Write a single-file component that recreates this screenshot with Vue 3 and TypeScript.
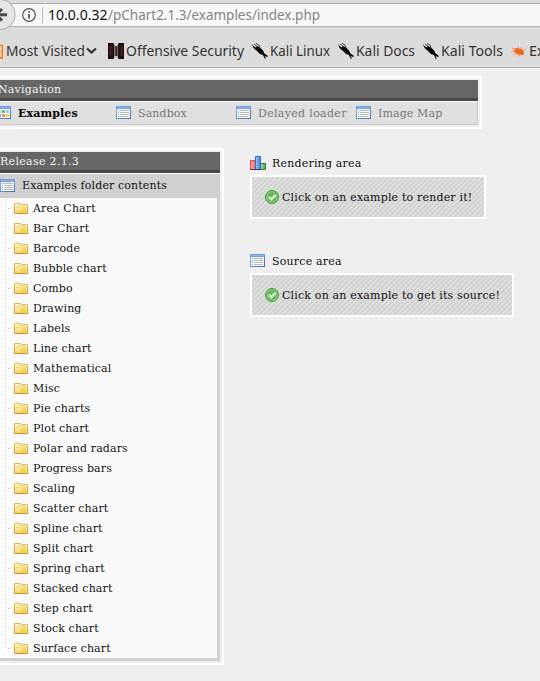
<script setup lang="ts">
interface Bookmark { label: string; kind: 'feed' | 'offsec' | 'kali' | 'exploit'; width: number; text: number }
interface Tab { label: string; active: boolean; wide?: boolean }

const bookmarks: Bookmark[] = [
  { label: 'Most Visited', kind: 'feed', width: 108, text: 79 },
  { label: 'Offensive Security', kind: 'offsec', width: 144, text: 118 },
  { label: 'Kali Linux', kind: 'kali', width: 86, text: 60 },
  { label: 'Kali Docs', kind: 'kali', width: 85, text: 59 },
  { label: 'Kali Tools', kind: 'kali', width: 88, text: 62 },
  { label: 'Exploit-DB', kind: 'exploit', width: 100, text: 70 },
]
const tabs: Tab[] = [
  { label: 'Examples', active: true },
  { label: 'Sandbox', active: false },
  { label: 'Delayed loader', active: false, wide: true },
  { label: 'Image Map', active: false },
]
const folders: string[] = [
  'Area Chart', 'Bar Chart', 'Barcode', 'Bubble chart', 'Combo', 'Drawing', 'Labels', 'Line chart',
  'Mathematical', 'Misc', 'Pie charts', 'Plot chart', 'Polar and radars', 'Progress bars', 'Scaling',
  'Scatter chart', 'Spline chart', 'Split chart', 'Spring chart', 'Stacked chart', 'Step chart',
  'Stock chart', 'Surface chart',
]
const areas = [
  { title: 'Rendering area', message: 'Click on an example to render it!', chart: true },
  { title: 'Source area', message: 'Click on an example to get its source!', chart: false },
]
</script>

<template>
  <svg class="defs" width="0" height="0">
    <defs>
      <linearGradient id="blueFrame" x2="1" y2="1"><stop stop-color="#8fb6e8" /><stop offset="1" stop-color="#3d6fbe" /></linearGradient>
      <linearGradient id="gold" x2="1" y2="1"><stop stop-color="#fffbe0" /><stop offset=".45" stop-color="#f8e08a" /><stop offset="1" stop-color="#efc916" /></linearGradient>
      <linearGradient id="goldEdge" x2="0" y2="1"><stop stop-color="#e6bd50" /><stop offset="1" stop-color="#d98b2b" /></linearGradient>
      <linearGradient id="redBar"><stop stop-color="#ffb0a8" /><stop offset="1" stop-color="#f9625e" /></linearGradient>
      <linearGradient id="blueBar"><stop stop-color="#9cc8f8" /><stop offset="1" stop-color="#3f7fdc" /></linearGradient>
      <linearGradient id="greenBar"><stop stop-color="#a9d4a3" /><stop offset="1" stop-color="#559e52" /></linearGradient>
      <symbol id="list" viewBox="0 0 15 13">
        <rect x=".5" y=".5" width="14" height="12" fill="#fff" stroke="url(#blueFrame)" />
        <path d="M0 0h15v3H0z" fill="#6f9bdf" /><path d="M1 1h13v1H1z" fill="#8db4ea" />
        <path d="M2 4.500h1M2 6.500h1M2 8.500h1M2 10.500h1" stroke="#4fb1ff" />
        <path d="M4 4.500h9M4 6.500h9M4 8.500h9M4 10.500h9" stroke="#b7b7b7" />
      </symbol>
      <symbol id="grid" viewBox="0 0 15 13">
        <rect x=".5" y=".5" width="14" height="12" fill="#fff" stroke="url(#blueFrame)" />
        <path d="M0 0h15v3H0z" fill="#6f9bdf" /><path d="M1 1h13v1H1z" fill="#8db4ea" />
        <path d="M2 4h3v3H2zM10 4h3v3h-3z" fill="#8ccaff" /><path d="M6 4h3v3H6z" fill="#77b75f" />
        <path d="M2 8h3v3H2z" fill="#5fa9ee" /><path d="M6 8h3v3H6z" fill="#ff8a55" /><path d="M10 8h3v3h-3z" fill="#f3d34f" />
      </symbol>
      <symbol id="folder" viewBox="0 0 14 11">
        <path d="M.5 10.500V.5h6l1 1h6v9z" fill="#fff4c5" stroke="url(#goldEdge)" />
        <path d="M2 9.500V4.500h4l1-1h5v6z" fill="url(#gold)" stroke="#edca5b" stroke-width=".7" />
        <path d="M4 2.500h3" stroke="#efc966" />
      </symbol>
      <symbol id="bars" viewBox="0 0 16 14">
        <path d="M.5 4.500h5v9h-5z" fill="url(#redBar)" stroke="#ea4a4e" />
        <path d="M10.500 7.500h5v6h-5z" fill="url(#greenBar)" stroke="#39803d" />
        <path d="M5.500 .5h5v13h-5z" fill="url(#blueBar)" stroke="#2f6fcc" />
        <path d="M0 13.500h5" stroke="#a4232c" /><path d="M5 13.500h6" stroke="#17458d" />
      </symbol>
      <symbol id="check" viewBox="0 0 14 14">
        <circle cx="7" cy="7" r="6.500" fill="#62bb52" stroke="#359b30" />
        <circle cx="7" cy="7" r="5.300" fill="none" stroke="#9bd889" stroke-width=".9" />
        <path d="M4 7l2.300 2.300L10.500 4.900" fill="none" stroke="#fff" stroke-width="2.200" />
      </symbol>
    </defs>
  </svg>

  <header class="browser">
    <div class="address">
      <div class="back">
        <svg width="32" height="30" viewBox="0 0 32 30"><circle cx="16" cy="14.500" r="15.200" fill="#e5e5e5" stroke="#aaa" /><path d="M23 14.800H12M18 9l-6 5.800 6 5.800" fill="none" stroke="#4a4a4a" stroke-width="3" /></svg>
      </div>
      <svg class="info" width="14" height="14" viewBox="0 0 14 14"><circle cx="7" cy="7" r="6.300" fill="none" stroke="#555" stroke-width="1.200" /><path d="M7 6v4.500M7 3.200v1.600" stroke="#444" stroke-width="1.600" /></svg>
      <span class="divider"></span>
      <svg class="url" width="290" height="22"><text class="host" x="0" y="16" textLength="59.500" lengthAdjust="spacingAndGlyphs">10.0.0.32</text><text x="60" y="16" textLength="212" lengthAdjust="spacingAndGlyphs">/pChart2.1.3/examples/index.php</text></svg>
    </div>
    <nav class="bookmarks">
      <div v-for="b in bookmarks" :key="b.label" class="bookmark" :style="{ width: b.width + 'px' }">
        <svg v-if="b.kind === 'feed'" class="feed" width="16" height="16" viewBox="0 0 16 16"><path d="M1 2.500h14.300v12.500H1" fill="#fbe9d6" stroke="#ef7909" stroke-width="1.500" /><path d="M9 6.500h4v8M9 10h2v5" fill="none" stroke="#ef9a45" /></svg>
        <svg v-else-if="b.kind === 'offsec'" width="16" height="16" viewBox="0 0 16 16"><path d="M0 0h16v16H0z" fill="#180b0d" /><path d="M1 3h2v9H1zM13 2h2v11h-2z" fill="#42191c" /><path d="M5.500 0h5l-1 3v10l1 3h-5l1-3V3z" fill="#d9d1cc" /><path d="M7.300 3h1.600v10H7.300z" fill="#1d1213" /><path d="M4 1v14M12 2v12" stroke="#54292b" stroke-width=".8" /></svg>
        <svg v-else-if="b.kind === 'kali'" width="16" height="16" viewBox="0 0 16 16"><path d="M0 1l1.500 2L4 4.500 5 3l3 1.500 3 3 1.500 3L16 13l-1 1-2.500-1 1.500 3-1.500-.5L11 12l-3-1-3-3-2.500-2L1 4z" fill="#050505" /><path d="M4 .5l3 1.500 1 2.500M2 1l4 3" stroke="#222" stroke-width=".8" fill="none" /></svg>
        <svg v-else width="16" height="16" viewBox="0 0 16 16"><ellipse cx="8" cy="8.500" rx="5.300" ry="3.200" transform="rotate(22 8 8.500)" fill="#f0660f" /><path d="M1 5l5 2M0 9l5-1M2 12l4-2M7 3l1 4M10 4l1 3M13 7l2-1M12 11l2 2M8 10l-1 4" stroke="#ee8d52" stroke-width=".9" /></svg>
        <svg class="label" :width="b.text + 1" height="24"><text x="0" y="17" :textLength="b.text" lengthAdjust="spacingAndGlyphs">{{ b.label }}</text></svg>
        <svg v-if="b.kind === 'feed'" class="chevron" width="11" height="8" viewBox="0 0 11 8"><path d="M1 1.500l4.500 4 4.500-4" fill="none" stroke="#333" stroke-width="2.300" /></svg>
      </div>
    </nav>
  </header>

  <main class="page">
    <section class="frame navigation">
      <h2 class="bar">Navigation</h2>
      <div class="tabs">
        <a v-for="t in tabs" :key="t.label" class="tab" :class="{ active: t.active, wide: t.wide }">
          <svg width="15" height="13"><use :href="t.active ? '#grid' : '#list'" /></svg><span>{{ t.label }}</span>
        </a>
      </div>
    </section>

    <div class="columns">
      <section class="frame sidebar">
        <h2 class="bar release">Release 2.1.3</h2>
        <div class="heading"><svg width="15" height="13"><use href="#list" /></svg>Examples folder contents</div>
        <ul class="tree">
          <li v-for="f in folders" :key="f"><span class="branch"></span><svg width="14" height="11"><use href="#folder" /></svg><span class="name">{{ f }}</span></li>
        </ul>
      </section>

      <div class="areas">
        <section v-for="a in areas" :key="a.title" class="area">
          <h3>
            <svg v-if="a.chart" width="16" height="14"><use href="#bars" /></svg>
            <svg v-else width="16" height="14" viewBox="0 0 16 14"><use href="#list" width="15" height="13" /></svg>
            <span>{{ a.title }}</span>
          </h3>
          <div class="message"><svg width="14" height="14"><use href="#check" /></svg><span>{{ a.message }}</span></div>
        </section>
      </div>
    </div>
  </main>
</template>

<style>
body { background: #efefef; overflow: hidden; }
</style>

<style scoped>
* { box-sizing: border-box; }
svg { flex: none; display: block; }
.defs { position: absolute; }
.browser { height: 68px; background: #dcdcdc; border-bottom: 1px solid #aeaeae; padding-top: 3px; font-family: "Noto Sans", "Open Sans", sans-serif; }
.address { height: 24px; display: flex; align-items: center; background: #f8f8f8; border: solid #b0b0b0; border-width: 1px 0; }
.back { width: 16px; margin-right: 6px; display: flex; justify-content: flex-end; flex: none; }
.divider { width: 1px; height: 16px; background: #b7b7b7; margin: 0 5px 0 6px; }
.url, .label { overflow: visible; }
.url text { font-size: 15px; fill: #858585; }
.url .host { fill: #111; }
.bookmarks { display: flex; height: 40px; padding-top: 4px; }
.bookmark { display: flex; align-items: center; flex: none; gap: 2px; height: 40px; }
.feed { margin-left: -13px; margin-right: 1px; }
.chevron { margin-left: -2px; }
.label text { font-size: 14.500px; fill: #333; }
.page { padding-top: 8px; font: 11px/20px "DejaVu Serif", serif; color: #111; }
.frame { border: solid #fff; border-width: 2px 2px 2px 0; padding: 2px 2px 2px 0; }
.navigation { width: 482px; height: 53px; }
.bar { margin: 0; height: 21px; background: #666; border-bottom: 3px solid #484848; color: #f2f2f2; font-size: 11px; line-height: 18px; padding-top: 1px; font-weight: normal; text-indent: -2px; letter-spacing: .22px; }
.release { text-indent: 0; letter-spacing: .32px; }
.tabs { display: flex; height: 24px; border-top: 1px solid #fff; border-bottom: 1px solid #ccc; border-right: 1px solid #ccc; background: #e0e0e0; margin-left: -4px; }
.tab { width: 120px; flex: none; display: flex; align-items: center; gap: 7px; color: #777; height: 22px; white-space: nowrap; letter-spacing: .12px; }
.tab svg { margin-top: -1px; }
.tab span { padding-top: 1px; }
.tab.active { color: #000; font-weight: bold; }
.tab.wide { letter-spacing: .33px; }
.columns { display: flex; gap: 26px; margin-top: 19px; }
.sidebar { width: 224px; height: 517px; flex: none; }
.heading { height: 25px; border-top: 1px solid #fff; background: #d0d0d0; display: flex; align-items: center; gap: 7px; padding-bottom: 1px; letter-spacing: .13px; }
.heading svg { margin-top: -1px; }
.tree { margin: 0; padding: 0; height: 463px; list-style: none; border: solid #d0d0d0; border-width: 0 3px 3px 0; background: linear-gradient(90deg, #fff 13px, #fafafa 13px); }
.tree li { height: 20px; display: flex; align-items: center; letter-spacing: .12px; }
.tree svg { margin: 1px 5px 0 1px; }
.name { padding-top: 2px; }
.branch { width: 13px; height: 20px; flex: none; background: repeating-linear-gradient(180deg, #ddd 0 2px, transparent 2px 4px) 5px 0 / 1px 20px no-repeat, repeating-linear-gradient(90deg, #d8d8d8 0 2px, transparent 2px 4px) 8px 10px / 5px 1px no-repeat; }
.tree li:last-child .branch { background-size: 1px 10px, 5px 1px; }
.areas { padding-top: 5px; }
.area { height: 98px; }
.area h3 { display: flex; align-items: center; gap: 6px; margin: 0; font-size: 11px; font-weight: normal; height: 22px; line-height: 20px; padding-bottom: 2px; letter-spacing: .2px; }
.area h3 span { padding-top: 2px; }
.message { display: flex; align-items: center; gap: 3px; width: max-content; height: 44px; border: 2px solid #fff; padding: 0 12px 0 13px; white-space: nowrap; letter-spacing: .18px; background: repeating-linear-gradient(135deg, #d3d3d3 0 2.400px, #e1e1e1 2.400px 3.536px); }
.message span { padding-top: 1px; }
</style>
